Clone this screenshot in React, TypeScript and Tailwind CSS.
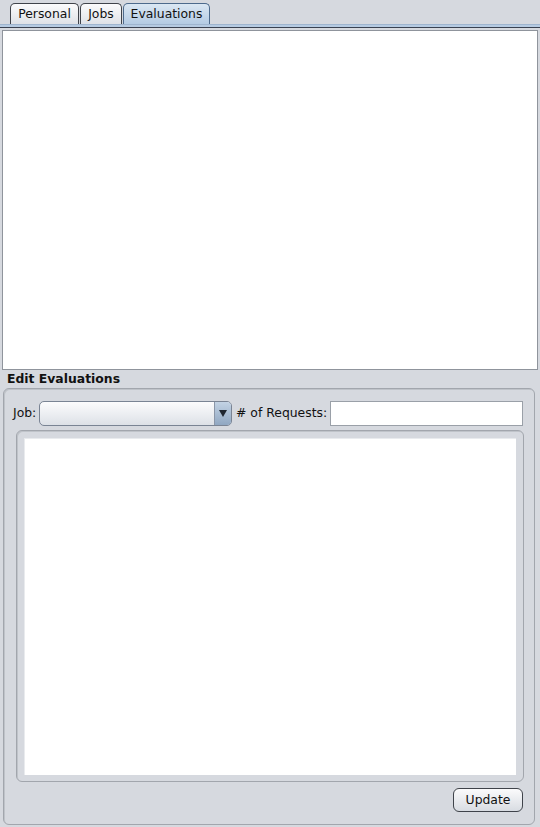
import React from "react";

const font = { fontFamily: '"DejaVu Sans", "Liberation Sans", sans-serif' };

function Tab({ label, width, selected }: { label: string; width: string; selected?: boolean }) {
    return (
        <div
            className={
                (selected
                    ? "border-[#4d6a8c] bg-gradient-to-b from-[#dbe7f3] to-[#b4cbe3] "
                    : "border-[#3f434a] bg-gradient-to-b from-[#fbfbfc] to-[#dfe2e7] ") +
                width +
                " h-[21px] pt-[1px] flex items-center justify-center rounded-t-[5px] border border-b-0 text-[12.4px] text-[#111] whitespace-nowrap"
            }
        >
            {label}
        </div>
    );
}

export default function App() {
    return (
        <div
            className="w-[540px] h-[827px] bg-[#d6d9df] flex flex-col overflow-hidden"
            style={font}
        >
            {/* TABS */}
            <div className="h-[24px] pl-[10px] flex items-end gap-[1px]">
                <Tab label="Personal" width="w-[69px]" />
                <Tab label="Jobs" width="w-[42px]" />
                <Tab label="Evaluations" width="w-[87px]" selected />
            </div>
            <div className="h-[3px] bg-[#b6cbe2] border-t border-[#9fb5cf]" />
            <div className="h-[1px] bg-[#3a4150]" />

            {/* TOP LIST */}
            <div className="mt-[2px] mx-[2px] h-[340px] bg-white border border-[#8f949c]" />

            {/* EDIT EVALUATIONS */}
            <div className="h-[18px] pl-[7px] pt-[1px] flex items-center text-[12.4px] font-bold text-[#111]">
                Edit Evaluations
            </div>
            <div className="ml-[3px] w-[532px] h-[437px] rounded-[6px] border border-[#a2a6ad] shadow-[inset_1px_1px_0_#bfc3c9] flex flex-col pt-[12px] pl-[9px] pr-[11px]">
                <div className="h-[25px] flex items-center text-[12.4px] text-[#111] whitespace-nowrap">
                    <span className="w-[26px] shrink-0">Job:</span>
                    <div className="w-[193px] shrink-0 h-[25px] rounded-[5px] border border-[#7a8494] bg-gradient-to-b from-[#fcfcfd] to-[#dde1e7] flex justify-end overflow-hidden">
                        <div className="w-[17px] h-full border-l border-[#8a96a8] bg-gradient-to-b from-[#c3d3e4] to-[#90a7c2] flex items-center justify-center">
                            <svg width="8" height="7" viewBox="0 0 8 7">
                                <path d="M0 0 H8 L4 7 Z" fill="#1f2630" />
                            </svg>
                        </div>
                    </div>
                    <span className="ml-[4px] w-[94px] shrink-0"># of Requests:</span>
                    <div className="w-[193px] shrink-0 h-[25px] bg-white border border-[#9aa0a8]" />
                </div>

                <div className="mt-[4px] ml-[3px] w-[508px] h-[352px] rounded-[6px] border border-[#a2a6ad] shadow-[inset_1px_1px_0_#bfc3c9] pt-[7px] pl-[7px]">
                    <div className="w-[492px] h-[337px] bg-white border-t border-l border-[#e9ebee]" />
                </div>

                <div className="mt-[6px] flex justify-end">
                    <div className="w-[70px] h-[24px] rounded-[6px] border border-[#3f434a] bg-gradient-to-b from-[#fbfbfc] to-[#d8dce2] flex items-center justify-center text-[12.4px] text-[#111]">
                        Update
                    </div>
                </div>
            </div>
        </div>
    );
}
